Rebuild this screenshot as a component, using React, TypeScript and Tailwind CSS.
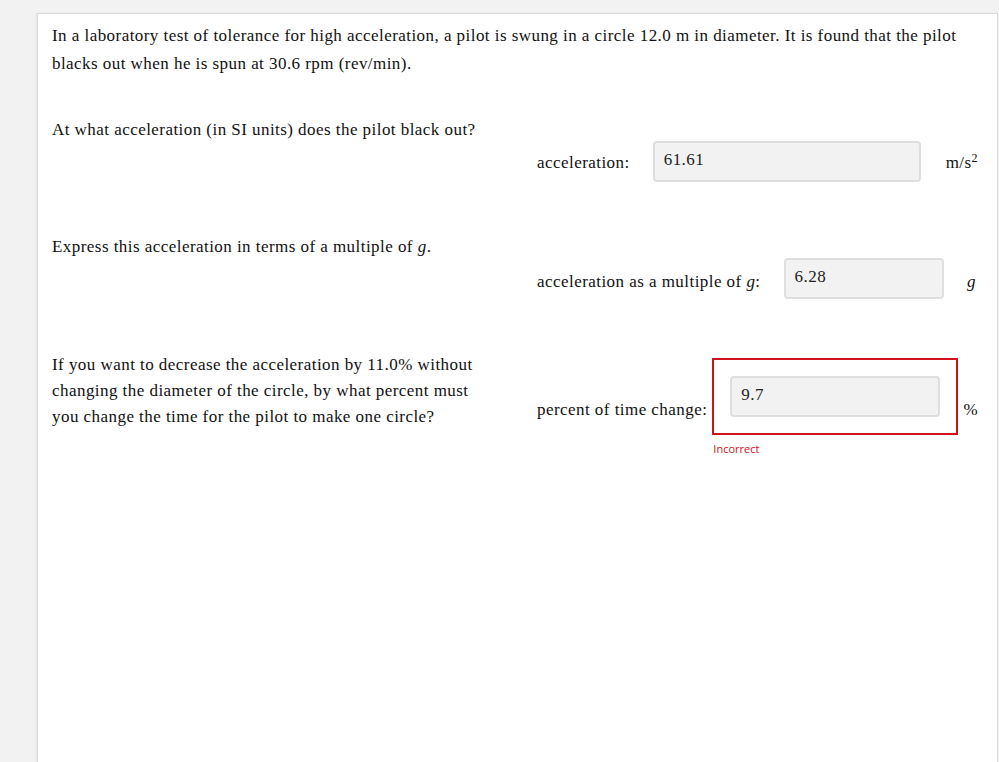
import React from "react";

const serif = { fontFamily: '"Liberation Serif", "Times New Roman", serif' };

function Box({ value, wrong }: { value: string; wrong?: boolean }) {
  return (
    <div className="flex-1 mx-[5px]">
      <div className={`border-2 p-[16px] ${wrong ? "border-[#d0121b]" : "border-transparent"}`}>
        <div className="h-[41px] rounded-[4px] border-2 border-[#dedede] bg-[#f2f2f2] px-[9px] pt-[5px] text-[17px] leading-[24px] text-[#222]">
          {value}
        </div>
      </div>
      {wrong && (
        <div
          className="mt-[7px] pl-[1px] text-[11px] leading-[14px] tracking-normal text-[#d0121b]"
          style={{ fontFamily: '"Open Sans", "Liberation Sans", sans-serif' }}
        >
          Incorrect
        </div>
      )}
    </div>
  );
}

function AnswerRow({
  label,
  unit,
  value,
  labelTop,
  wrong,
}: {
  label: React.ReactNode;
  unit: React.ReactNode;
  value: string;
  labelTop: string;
  wrong?: boolean;
}) {
  return (
    <div className="flex flex-1 items-start pr-[5px]">
      <div className={`shrink-0 leading-[24px] ${labelTop}`}>{label}</div>
      <Box value={value} wrong={wrong} />
      <div className={`shrink-0 leading-[24px] ${labelTop}`}>{unit}</div>
    </div>
  );
}

export default function App() {
  return (
    <div className="min-h-screen bg-[#f2f2f2] pl-[37px] pr-[1px] pt-[13px]">
      <div
        className="min-h-[749px] bg-white border-l border-r border-t border-[#dadada] px-[14px] pt-[8px] text-[17px] tracking-[0.45px] text-[#111] shadow-[-1px_0_2px_rgba(0,0,0,0.06)]"
        style={serif}
      >
        <p className="leading-[28px]">
          In a laboratory test of tolerance for high acceleration, a pilot is swung in a circle 12.0 m in
          diameter. It is found that the pilot blacks out when he is spun at 30.6 rpm (rev/min).
        </p>

        <div className="mt-[38px] flex">
          <div className="w-[485px] shrink-0 pr-[50px] leading-[28px]">
            At what acceleration (in SI units) does the pilot black out?
          </div>
          <div className="mt-[7px] flex flex-1">
            <AnswerRow
              label="acceleration:"
              value="61.61"
              labelTop="mt-[28px]"
              unit={
                <span className="pl-[2px]">
                  m/s<sup className="text-[12px]">2</sup>
                </span>
              }
            />
          </div>
        </div>

        <div className="mt-[33px] flex">
          <div className="w-[485px] shrink-0 pr-[50px] leading-[28px]">
            Express this acceleration in terms of a multiple of <i>g</i>.
          </div>
          <div className="mt-[7px] flex flex-1">
            <AnswerRow
              label={
                <span>
                  acceleration as a multiple of <i>g</i>:
                </span>
              }
              value="6.28"
              labelTop="mt-[30px]"
              unit={<i className="pr-[2px]">g</i>}
            />
          </div>
        </div>

        <div className="mt-[35px] flex">
          <div className="w-[485px] shrink-0 pr-[50px] leading-[26px]">
            If you want to decrease the acceleration by 11.0% without changing the diameter of the circle, by
            what percent must you change the time for the pilot to make one circle?
          </div>
          <div className="mt-[6px] flex flex-1">
            <AnswerRow label="percent of time change:" value="9.7" labelTop="mt-[40px]" unit="%" wrong />
          </div>
        </div>
      </div>
    </div>
  );
}
